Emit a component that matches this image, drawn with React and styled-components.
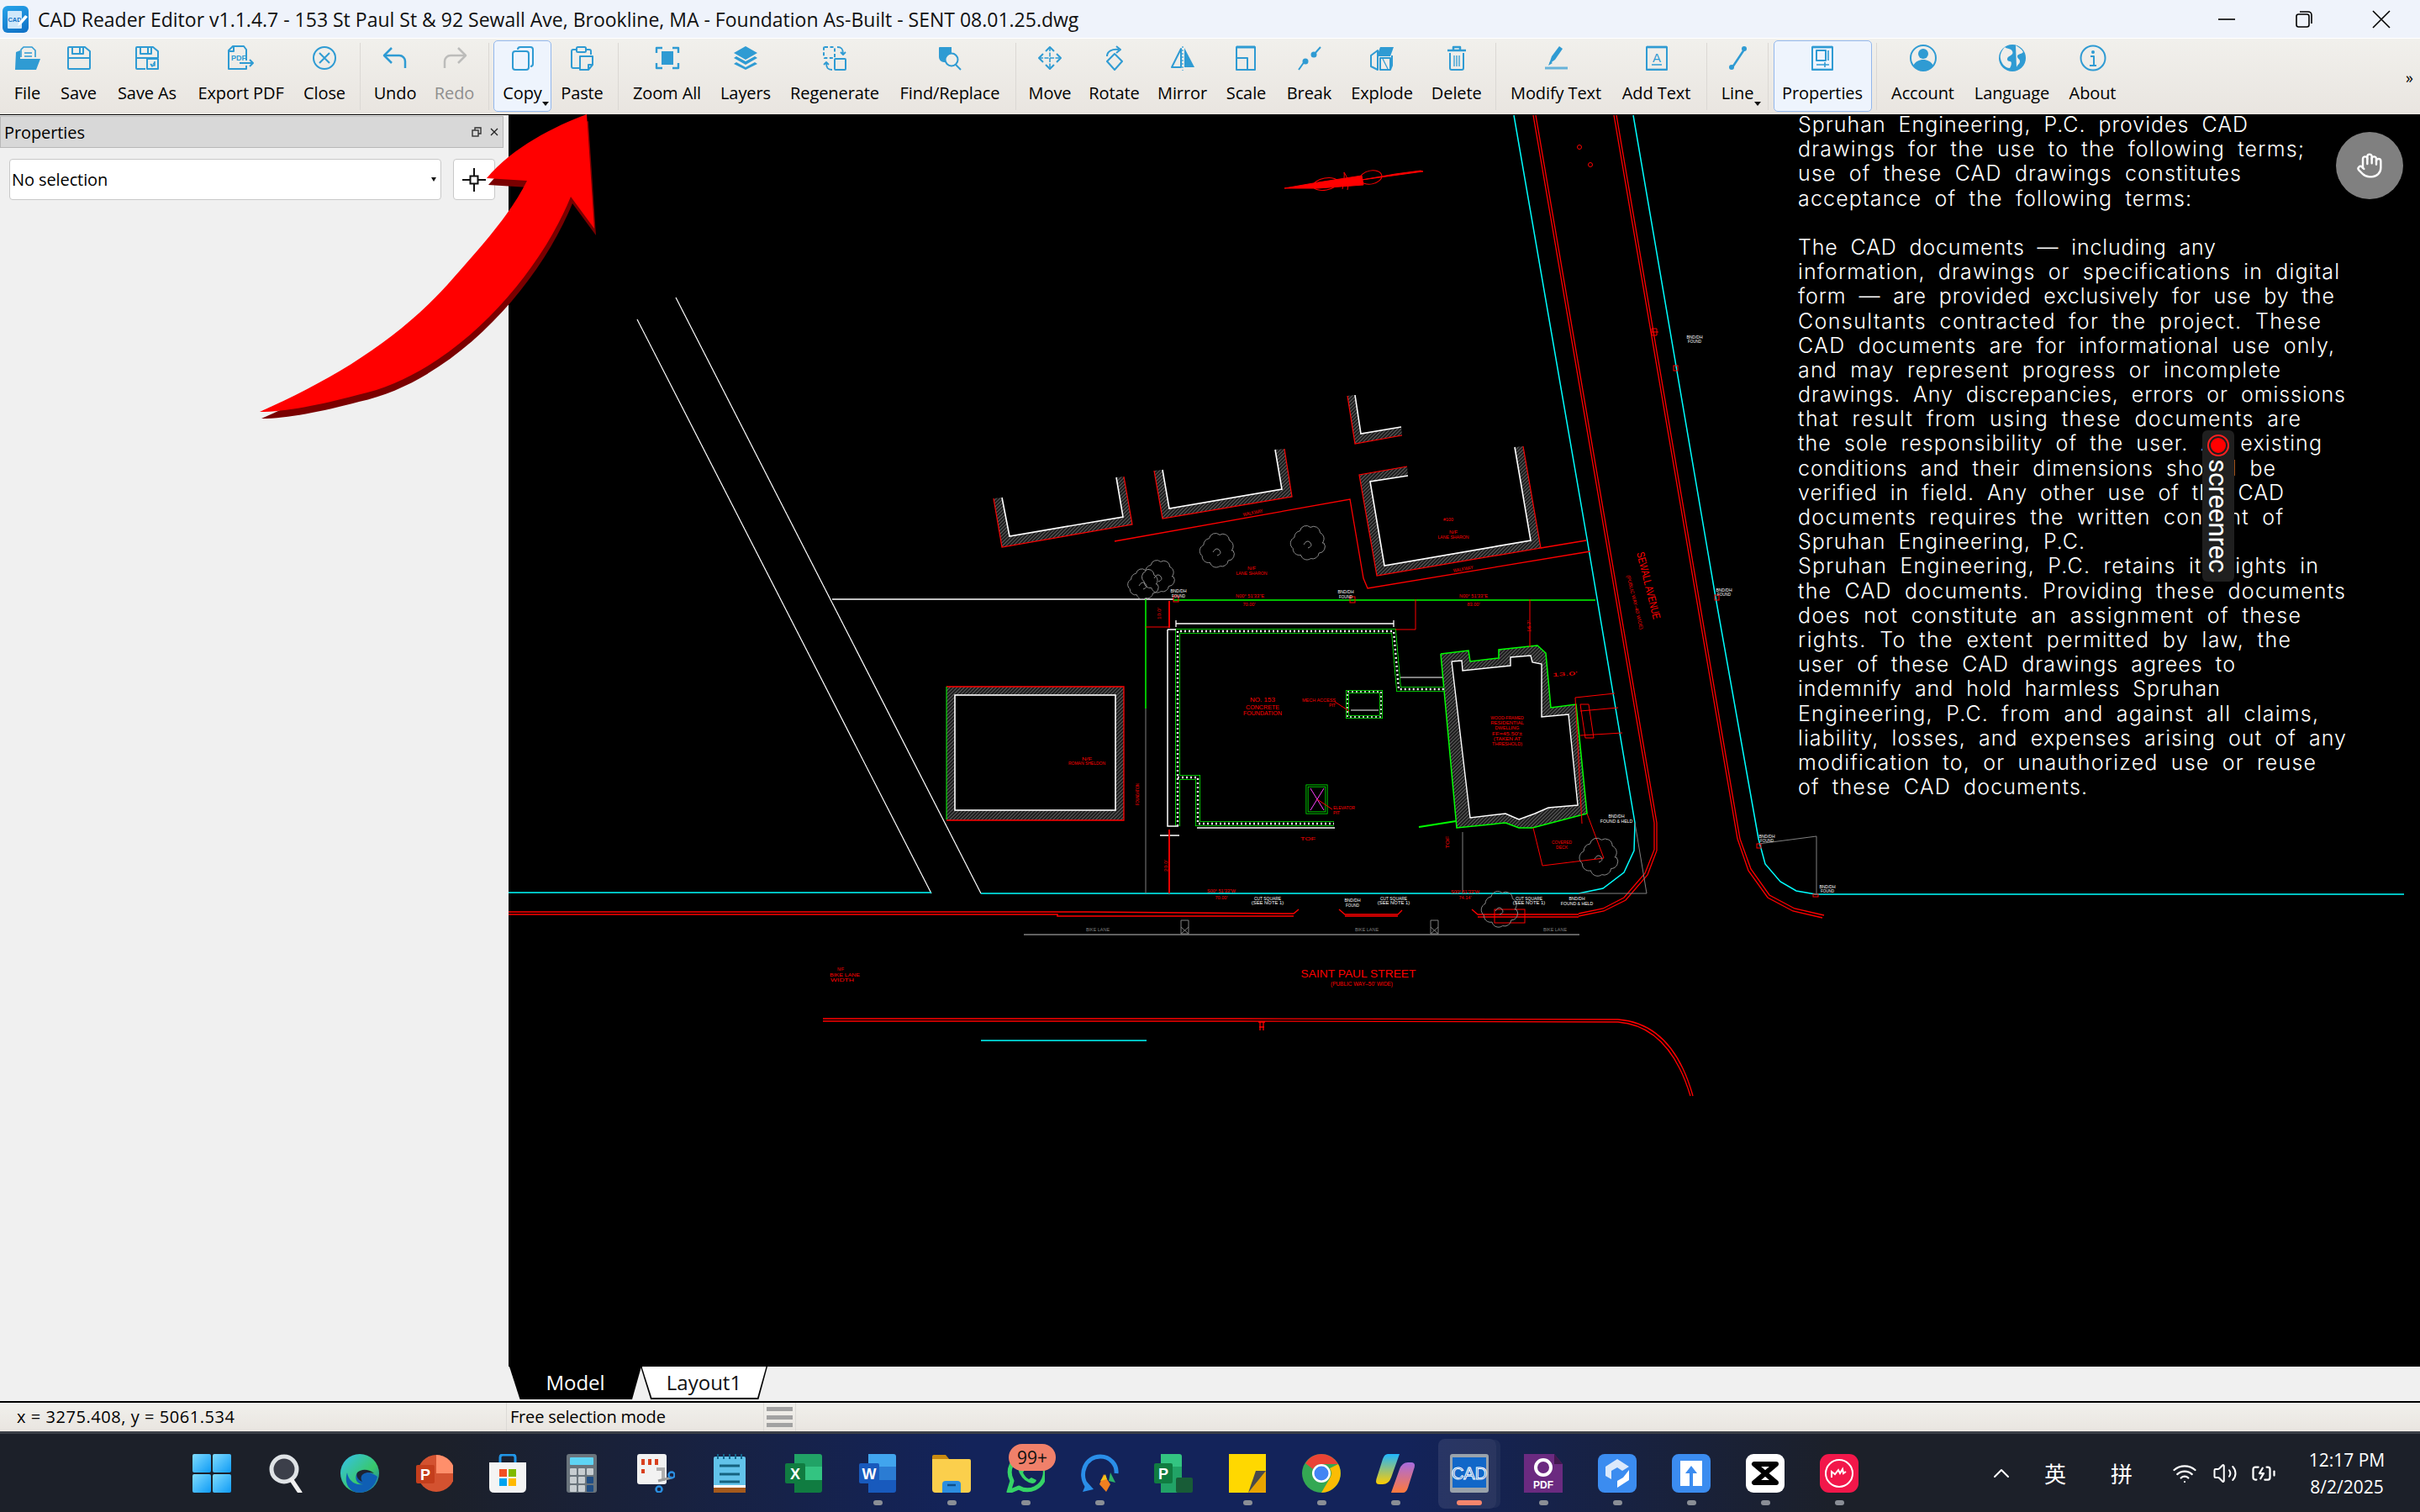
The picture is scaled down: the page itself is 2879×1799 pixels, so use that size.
import React from "react";
import styled, { createGlobalStyle } from "styled-components";
import { Hand, Wifi, Volume2, BatteryCharging, ChevronUp } from "lucide-react";

const GlobalStyle = createGlobalStyle`
  html, body {
    margin: 0;
    padding: 0;
    background: #000;
    overflow: hidden;
  }
  * { box-sizing: border-box; }
`;

const BLUE = "#2f9bd3";

const Ic = ({ children, w = 30, h = 30, vb }) => (
  <svg width={w} height={h} viewBox={vb || `0 0 ${w} ${h}`} fill="none" stroke={BLUE} strokeWidth="2" strokeLinejoin="round">
    {children}
  </svg>
);

const icons = {
  File: (
    <Ic>
      <path d="M7 14V5l3-3h10l4 4v8" strokeWidth="1.6" />
      <path d="M11 9h9M11 13h9" strokeWidth="1.6" />
      <path d="M0 29 L1 8 L6 6 L6 16 H30 L25 29Z" fill={BLUE} stroke="none" />
      <path d="M7 14 h18 v2 h-18z" fill="#f0eeea" stroke="none" />
    </Ic>
  ),
  Save: (
    <Ic>
      <path d="M2 3a1 1 0 0 1 1-1h19l6 5v20a1 1 0 0 1-1 1H3a1 1 0 0 1-1-1z" />
      <path d="M7 2v8h13V2M16 3v6" />
      <path d="M2 15h26" />
    </Ic>
  ),
  "Save As": (
    <Ic>
      <path d="M13 28H3a1 1 0 0 1-1-1V3a1 1 0 0 1 1-1h19l6 5v8" />
      <path d="M7 2v8h13V2M16 3v6" />
      <path d="M2 15h26" />
      <rect x="15" y="16" width="13" height="12" />
      <path d="M24 19v5h-4M19 22l2 3 3-2" fill={BLUE} strokeWidth="1.5" />
    </Ic>
  ),
  "Export PDF": (
    <Ic w={32}>
      <path d="M22 18V5l-3-4H6L1 6v22h21v-4" />
      <path d="M1 7h6V1" />
      <text x="4" y="18" fontFamily="Liberation Sans" fontSize="9" fontWeight="700" fill={BLUE} stroke="none">PDF</text>
      <path d="M14 21h16M26 17l4 4-4 4" />
    </Ic>
  ),
  Close: (
    <Ic>
      <circle cx="15" cy="15" r="13" />
      <path d="M9 9l12 12M21 9L9 21" />
    </Ic>
  ),
  Undo: (
    <Ic>
      <path d="M11 3L2 12l9 9" strokeWidth="2.5" />
      <path d="M2 12h18a7 7 0 0 1 7 7v8" strokeWidth="2.5" />
    </Ic>
  ),
  Redo: (
    <Ic>
      <g stroke="#bcbcba">
        <path d="M19 3l9 9-9 9" strokeWidth="2.5" />
        <path d="M28 12H10a7 7 0 0 0-7 7v8" strokeWidth="2.5" />
      </g>
    </Ic>
  ),
  Copy: (
    <Ic>
      <path d="M9 5a3 3 0 0 1 3-3h12a3 3 0 0 1 3 3v17a3 3 0 0 1-3 3" />
      <rect x="3" y="7" width="19" height="22" rx="3" />
    </Ic>
  ),
  Paste: (
    <Ic>
      <path d="M12 27H4a2 2 0 0 1-2-2V7a2 2 0 0 1 2-2h4M19 5h4a2 2 0 0 1 2 2v4" />
      <rect x="8" y="2" width="11" height="6" rx="1.5" />
      <path d="M12 13h15v10l-5 6H12z" />
      <path d="M22 29v-6h5" />
    </Ic>
  ),
  "Zoom All": (
    <Ic>
      <path d="M2 9V3h7M21 3h7v6M28 21v6h-7M9 27H2v-6" strokeWidth="2.4" />
      <rect x="8" y="7" width="14" height="16" fill={BLUE} stroke="none" />
    </Ic>
  ),
  Layers: (
    <Ic>
      <path d="M15 1l14 8-14 8L1 9z" fill={BLUE} stroke="none" />
      <path d="M4 13l11 6 11-6 3 2-14 8-14-8z" fill={BLUE} stroke="none" />
      <path d="M4 20l11 6 11-6 3 2-14 7-14-7z" fill={BLUE} stroke="none" />
    </Ic>
  ),
  Regenerate: (
    <Ic>
      <rect x="2" y="2" width="13" height="13" rx="1" strokeDasharray="4 2.5" />
      <rect x="15" y="16" width="13" height="13" rx="1" />
      <path d="M18 2c5 0 7 2 7 8M22 8l3 3 3-3" strokeWidth="1.8" />
      <path d="M12 29c-5 0-7-2-7-8M2 23l3-3 3 3" strokeWidth="1.8" />
    </Ic>
  ),
  "Find/Replace": (
    <Ic>
      <path d="M2 3a1 1 0 0 1 1-1h14v7a9 9 0 0 0-7 11 H8a6 6 0 0 1-6-6z" fill={BLUE} stroke="none" />
      <circle cx="17" cy="17" r="7.5" />
      <path d="M22 23l6 6" />
    </Ic>
  ),
  Move: (
    <Ic>
      <path d="M15 2v26M2 15h26" strokeWidth="1.6" strokeDasharray="5 1.5" />
      <path d="M10 7l5-5 5 5M10 23l5 5 5-5M7 10l-5 5 5 5M23 10l5 5-5 5" />
    </Ic>
  ),
  Rotate: (
    <Ic>
      <path d="M15 10l9 9-9 10-9-10z" />
      <path d="M6 13c0-6 6-9 14-8M17 1l5 4-5 4" />
    </Ic>
  ),
  Mirror: (
    <Ic>
      <path d="M13 4L2 26h11z" />
      <path d="M17 3l12 23H17z" fill={BLUE} stroke="none" />
      <path d="M15 1v29" strokeDasharray="2 2" strokeWidth="1.2" />
    </Ic>
  ),
  Scale: (
    <Ic>
      <path d="M3 2h22v27H3z" />
      <path d="M3 15h13v14" />
      <path d="M3 2h22" strokeWidth="3" />
    </Ic>
  ),
  Break: (
    <Ic>
      <path d="M2 29l7-10M20 11l8-9" strokeWidth="2" />
      <circle cx="10" cy="19" r="3.5" fill={BLUE} stroke="none" />
      <circle cx="20" cy="11" r="3.5" fill={BLUE} stroke="none" />
    </Ic>
  ),
  Explode: (
    <Ic>
      <path d="M2 12l8-6v23l-8-4z" />
      <path d="M13 2h16l-4 11H9z" fill={BLUE} stroke="none" />
      <path d="M13 15h12v14H13zM27 12v12l-2 5" />
      <path d="M16 16l6 12" strokeWidth="1.2" />
    </Ic>
  ),
  Delete: (
    <Ic>
      <path d="M4 6h22M11 5V2h8v3" strokeWidth="2.5" />
      <path d="M7 9v18a2 2 0 0 0 2 2h12a2 2 0 0 0 2-2V9" />
      <path d="M12 12v13M15 12v13M18 12v13" strokeWidth="1.3" />
    </Ic>
  ),
  "Modify Text": (
    <Ic>
      <path d="M7 22l3-9L19 1l4 3-9 13z" fill={BLUE} stroke="none" />
      <path d="M2 27h27" strokeWidth="3" opacity=".7" />
      <path d="M6 24l2-5 3 2z" fill={BLUE} stroke="none" />
    </Ic>
  ),
  "Add Text": (
    <Ic>
      <path d="M3 2h24v27H3z" />
      <path d="M3 2h24M3 29h24" strokeWidth="3" opacity=".7" />
      <text x="15" y="20" textAnchor="middle" fontFamily="Liberation Sans" fontSize="15" fill={BLUE} stroke="none">A</text>
      <path d="M9 23h12" strokeWidth="1.5" />
    </Ic>
  ),
  Line: (
    <Ic>
      <path d="M9 26L23 5" strokeWidth="2.5" />
      <circle cx="8" cy="26" r="3" fill={BLUE} stroke="none" />
      <circle cx="23" cy="4" r="3" fill={BLUE} stroke="none" />
    </Ic>
  ),
  Properties: (
    <Ic>
      <path d="M3 2h24v27H3z" />
      <path d="M3 2h24M3 29h24" strokeWidth="3" opacity=".7" />
      <rect x="8" y="6" width="11" height="12" />
      <path d="M22 6v12M8 23h15M18 20v6" strokeWidth="1.6" />
    </Ic>
  ),
  Account: (
    <Ic w={34} h={32}>
      <circle cx="17" cy="16" r="15" />
      <path d="M5 25c3-5 7-7 12-7s9 2 12 7a15 15 0 0 1-24 0z" fill={BLUE} stroke="none" />
      <circle cx="17" cy="11" r="6" fill={BLUE} stroke="none" />
    </Ic>
  ),
  Language: (
    <Ic w={34} h={32}>
      <circle cx="17" cy="16" r="16" fill={BLUE} stroke="none" />
      <path d="M8 3c4 3 7 1 9 5s-3 5-5 7-1 5 2 5 2 5 0 8C8 28 4 22 3 17s1-9 5-14z M21 1c3 2 7 4 9 8-3 3-7 2-7 5s3 3 3 6-3 4-4 7" fill="#f0eeea" stroke="none" />
    </Ic>
  ),
  About: (
    <Ic w={32} h={32}>
      <circle cx="16" cy="16" r="14.5" />
      <circle cx="16" cy="9" r="2" fill={BLUE} stroke="none" />
      <path d="M13 14h4v11M12 25h8" />
    </Ic>
  ),
};

const toolGroups = [
  [
    { label: "File", w: 32 },
    { label: "Save", w: 44 },
    { label: "Save As", w: 73 },
    { label: "Export PDF", w: 104 },
    { label: "Close", w: 49 },
  ],
  [
    { label: "Undo", w: 49 },
    { label: "Redo", w: 46, disabled: true },
  ],
  [
    { label: "Copy", w: 46, active: true, menu: true },
    { label: "Paste", w: 50 },
  ],
  [
    { label: "Zoom All", w: 82 },
    { label: "Layers", w: 59 },
    { label: "Regenerate", w: 107 },
    { label: "Find/Replace", w: 121 },
  ],
  [
    { label: "Move", w: 47 },
    { label: "Rotate", w: 60 },
    { label: "Mirror", w: 56 },
    { label: "Scale", w: 50 },
    { label: "Break", w: 54 },
    { label: "Explode", w: 73 },
    { label: "Delete", w: 58.5 },
  ],
  [
    { label: "Modify Text", w: 108 },
    { label: "Add Text", w: 85 },
  ],
  [{ label: "Line", w: 38, menu: true }],
  [{ label: "Properties", w: 94, active: true }],
  [
    { label: "Account", w: 75 },
    { label: "Language", w: 91 },
    { label: "About", w: 55 },
  ],
];

const noteLines = [
  ["Spruhan Engineering, P.C. provides CAD", 2674],
  ["drawings for the use to the following terms;", 2741],
  ["use of these CAD drawings constitutes", 2666],
  ["acceptance of the following terms:", 2607],
  ["", 0],
  ["The CAD documents — including any", 2636],
  ["information, drawings or specifications in digital", 2783],
  ["form — are provided exclusively for use by the", 2777],
  ["Consultants contracted for the project. These", 2761],
  ["CAD documents are for informational use only,", 2777],
  ["and may represent progress or incomplete", 2713],
  ["drawings. Any discrepancies, errors or omissions", 2790],
  ["that result from using these documents are", 2737],
  ["the sole responsibility of the user. All existing", 2762],
  ["conditions and their dimensions should be", 2707],
  ["verified in field. Any other use of the CAD", 2717],
  ["documents requires the written consent of", 2716],
  ["Spruhan Engineering, P.C.", 2480],
  ["Spruhan Engineering, P.C. retains its rights in", 2758],
  ["the CAD documents. Providing these documents", 2790],
  ["does not constitute an assignment of these", 2737],
  ["rights. To the extent permitted by law, the", 2725],
  ["user of these CAD drawings agrees to", 2659],
  ["indemnify and hold harmless Spruhan", 2641],
  ["Engineering, P.C. from and against all claims,", 2758],
  ["liability, losses, and expenses arising out of any", 2791],
  ["modification to, or unauthorized use or reuse", 2755],
  ["of these CAD documents.", 2483],
];

const pts = (arr) => arr.map((p) => p.join(",")).join(" ");

const RED = "#ff0000";
const GREEN = "#00ff00";
const CYAN = "#00ffff";
const GRAY = "#808080";

// scalloped tree outline
function treePath(cx, cy, r, lobes = 9) {
  let d = "";
  for (let i = 0; i <= lobes; i++) {
    const a = (i / lobes) * Math.PI * 2;
    const x = cx + Math.cos(a) * r * (i % 2 ? 0.95 : 1.05);
    const y = cy + Math.sin(a) * r * (i % 3 ? 1.05 : 0.92);
    d += i === 0 ? `M${x.toFixed(1)} ${y.toFixed(1)}` : `A${(r * 0.42).toFixed(1)} ${(r * 0.42).toFixed(1)} 0 0 1 ${x.toFixed(1)} ${y.toFixed(1)}`;
  }
  return d + "Z";
}

const Tree = ({ x, y, r = 18 }) => (
  <g fill="none" stroke="#8a8a8a" strokeWidth="1">
    <path d={treePath(x, y, r)} />
    <path d={`M${x - 5} ${y + 2}q4 -7 8 -2q3 4 -3 6`} />
  </g>
);

const Tag = ({ x, y, w, size = 6, fill = RED, rot, children, anchor = "middle" }) => (
  <text
    x={x}
    y={y}
    textAnchor={anchor}
    fontFamily="Liberation Sans, sans-serif"
    fontSize={size}
    fill={fill}
    textLength={w}
    lengthAdjust={w ? "spacingAndGlyphs" : undefined}
    transform={rot ? `rotate(${rot} ${x} ${y})` : undefined}
  >
    {children}
  </text>
);

const Wall = ({ outer, inner }) => (
  <g>
    <polygon points={pts([...outer, ...inner])} fill="url(#hatch)" />
    <polyline points={pts(outer)} fill="none" stroke={RED} strokeWidth="1.2" />
    <polyline points={pts(inner)} fill="none" stroke="#fff" strokeWidth="1.6" />
  </g>
);

function CadDrawing() {
  return (
    <Sheet viewBox="605 137 2274 1489">
      <defs>
        <pattern id="hatch" width="3" height="3" patternUnits="userSpaceOnUse" patternTransform="rotate(45)">
          <rect width="3" height="3" fill="#1c1c1c" />
          <line x1="0" y1="0" x2="0" y2="3" stroke="#8c8c8c" strokeWidth="1.2" />
        </pattern>
      </defs>

      {/* neighbouring roads */}
      <g fill="none" stroke="#fff" strokeWidth="1.2">
        <path d="M758 380L1108 1063" />
        <path d="M804 354L1167 1063" />
        <path d="M990 713H1396" strokeWidth="1.6" />
      </g>
      <g fill="none" stroke={CYAN} strokeWidth="1.5">
        <path d="M605 1062H1108M1167 1063H1878L1907 1057L1932 1038L1944 1012L1945 979L1888 641L1801 137" />
        <path d="M1943 137L2040 705L2092 998L2100 1028L2118 1049L2137 1060L2160 1064H2860" />
        <path d="M1167 1238H1364" />
      </g>
      <g fill="none" stroke={RED} strokeWidth="1.3">
        <path d="M1824 137L1968 979V1011L1957 1039L1932 1068L1907 1081L1878 1087" />
        <path d="M1827 137L1971 979V1012L1960 1041L1934 1071L1908 1084L1878 1090" />
        <path d="M1920 137L2067 998L2080 1036L2103 1068L2133 1084L2168 1092" />
        <path d="M1923 137L2070 998L2083 1034L2105 1065L2135 1081L2170 1089" />
        <path d="M605 1085H1293L1539 1087L1545 1082" strokeWidth="1.5" />
        <path d="M605 1088H1258V1090H1539" strokeWidth="1.5" />
        <path d="M1593 1082L1600 1088H1663L1668 1083M1600 1090H1663" />
        <path d="M1751 1082L1758 1088H1878M1758 1091H1878" />
        <path d="M979 1212H1475L1925 1213Q1990 1218 2014 1304" />
        <path d="M979 1215H1475L1925 1216Q1986 1221 2011 1304" />
        <path d="M1497 1216h8M1499 1216v10M1503 1216v10M1498 1222h6" />
        <path d="M1326 644L1606 594L1622 688L1627 700L1892 656" />
        <path d="M1833 652L1887 643" />
      </g>
      <g fill="none" stroke={GRAY} strokeWidth="1">
        <path d="M1945 979L1959 1063H1878" />
        <path d="M2092 1004L2161 995V1064" />
        <path d="M1396 714H1898" stroke={GREEN} strokeWidth="1.5" />
        <path d="M1363 843V1063" />
        <path d="M1218 1112H1879" strokeWidth="1.6" />
        <path d="M1740 990V1063" />
        <path d="M1405 1095h9v16h-9zM1405 1103l9 8M1414 1103l-9 8" />
        <path d="M1702 1095h9v16h-9zM1702 1103l9 8M1711 1103l-9 8" />
      </g>

      {/* ornament up top */}
      <g fill={RED} stroke={RED}>
        <path d="M1528 224L1568 217L1620 209L1622 220L1568 224Z" />
        <path d="M1620 214L1693 204L1690 203L1660 207Z" />
        <g fill="none">
          <ellipse cx="1577" cy="219" rx="15" ry="7" transform="rotate(-10 1577 219)" />
          <ellipse cx="1631" cy="211" rx="13" ry="8" transform="rotate(-10 1631 211)" />
          <path d="M1597 225Q1600 210 1599 205Q1606 215 1603 226" />
        </g>
      </g>
      <g fill="none" stroke={RED}>
        <circle cx="1879" cy="175" r="2.5" />
        <circle cx="1892" cy="196" r="2.5" />
        <path d="M1965 391h6v8h-6zM1965 395h8" />
        <rect x="1991" y="435" width="5" height="6" />
        <rect x="2040" y="708" width="5" height="6" />
        <rect x="1396" y="709" width="6" height="7" />
        <rect x="1606" y="710" width="6" height="7" />
        <rect x="2090" y="1004" width="5" height="5" />
        <rect x="2157" y="1064" width="6" height="3" />
        <rect x="1778" y="1082" width="36" height="16" />
      </g>

      {/* neighbouring buildings */}
      <Wall
        outer={[[1182, 593], [1192, 651], [1347, 624], [1337, 567]]}
        inner={[[1328, 568], [1336, 615], [1201, 638], [1192, 592]]}
      />
      <Wall
        outer={[[1373, 560], [1383, 617], [1537, 591], [1528, 534]]}
        inner={[[1517, 535], [1525, 582], [1391, 605], [1383, 559]]}
      />
      <Wall
        outer={[[1603, 471], [1612, 528], [1668, 518]]}
        inner={[[1667, 508], [1619, 516], [1612, 470]]}
      />
      <Wall
        outer={[[1674, 555], [1617, 565], [1638, 685], [1833, 652], [1812, 531]]}
        inner={[[1802, 532], [1821, 643], [1647, 673], [1630, 573], [1675, 566]]}
      />

      {/* garage to the left */}
      <path d="M1126 817H1337V976H1126ZM1136 827V964H1327V827Z" fill="url(#hatch)" fillRule="evenodd" />
      <path d="M1126 817H1337V976H1126" fill="none" stroke={RED} strokeWidth="1.3" />
      <path d="M1126 817V975" fill="none" stroke={GREEN} />
      <rect x="1136" y="827" width="191" height="137" fill="none" stroke="#fff" strokeWidth="1.6" />

      {/* house */}
      <path
        d="M1714 778L1747 774L1749 787L1783 783V773L1829 768L1839 777L1845 842L1875 838L1888 968L1823 985L1807 985L1791 979L1733 985Z
           M1727 787L1739 786L1740 798L1797 792V782L1821 780L1823 788L1834 790V853L1866 850L1877 958L1842 961L1826 968L1807 975L1791 968L1749 973Z"
        fill="url(#hatch)"
        fillRule="evenodd"
      />
      <path d="M1714 778L1747 774L1749 787L1783 783V773L1829 768L1839 777L1845 842L1875 838L1888 968L1823 985L1807 985L1791 979L1733 985L1714 778" fill="none" stroke={GREEN} strokeWidth="1.5" />
      <path d="M1727 787L1739 786L1740 798L1797 792V782L1821 780L1823 788L1834 790V853L1866 850L1877 958L1842 961L1826 968L1807 975L1791 968L1749 973L1727 787" fill="none" stroke="#fff" strokeWidth="1.4" />
      <path d="M1688 984L1732 977" fill="none" stroke={GREEN} strokeWidth="2" />

      {/* foundation walls */}
      <g fill="none">
        <g stroke={GREEN} strokeWidth="6">
          <path d="M1401 983V751H1658L1664 820H1718" />
          <path d="M1401 925H1425V980H1587" />
          <rect x="1603" y="823" width="40" height="30" strokeWidth="4" />
          <rect x="1555" y="935" width="23" height="32" strokeWidth="3" />
        </g>
        <g stroke="#000" strokeWidth="4.4">
          <path d="M1401 983V751H1658L1664 820H1718" />
          <path d="M1401 925H1425V980H1587" />
          <rect x="1603" y="823" width="40" height="30" strokeWidth="2.5" />
          <rect x="1555" y="935" width="23" height="32" strokeWidth="1.5" />
        </g>
        <g stroke="#fff" strokeWidth="2.4" strokeDasharray="2 3">
          <path d="M1401 983V751H1658L1664 820H1718" />
          <path d="M1401 925H1425V980H1587" />
          <rect x="1603" y="823" width="40" height="30" strokeWidth="1.6" />
        </g>
        <path d="M1389 749V983H1402M1389 749H1399" stroke="#fff" strokeWidth="1.5" />
        <path d="M1399 742H1658M1399 738v8M1658 738v8M1424 985H1588M1380 994H1403" stroke="#fff" strokeWidth="1.3" />
        <path d="M1666 806H1716M1607 845H1640" stroke="#fff" />
        <path d="M1559 938L1575 964M1575 938L1559 964" stroke="#ff40ff" />
        <path d="M1567 951L1585 963" stroke={RED} />
        <path d="M1588 835L1605 846" stroke={RED} />
        <path d="M1363 713V843" stroke={GREEN} strokeWidth="1.5" />
        <path d="M1391 715V747M1391 987V1063" stroke={RED} strokeWidth="1.8" />
        <path d="M1363 746H1391M1660 749H1684V713" stroke={RED} />
        <path d="M1820 713V770" stroke={RED} />
        <path d="M1824 985L1835 1030L1908 1021L1888 968" stroke={RED} />
        <path d="M1874 830L1921 825M1874 830L1882 980M1880 846L1925 842M1880 875L1930 872" stroke={RED} />
        <path d="M1880 838h10l6 40h-10z" stroke={RED} />
      </g>

      {/* trees */}
      <Tree x={1448} y={655} />
      <Tree x={1556} y={646} />
      <Tree x={1360} y={695} r={16} />
      <Tree x={1378} y={686} r={17} />
      <Tree x={1902} y={1020} r={20} />
      <Tree x={1784} y={1082} r={19} />

      {/* labels */}
      <Tag x={1502} y={835} size={8} w={30}>NO. 153</Tag>
      <Tag x={1502} y={844} size={8} w={40}>CONCRETE</Tag>
      <Tag x={1502} y={851} size={8} w={46}>FOUNDATION</Tag>
      <Tag x={1569} y={835} w={40} size={6}>MECH ACCESS</Tag>
      <Tag x={1585} y={841} w={8} size={6}>PIT</Tag>
      <Tag x={1599} y={963} w={26} size={6}>ELEVATOR</Tag>
      <Tag x={1590} y={969} w={8} size={6}>PIT</Tag>
      <Tag x={1293} y={905} w={12} size={5}>N/F</Tag>
      <Tag x={1293} y={910} w={44} size={5}>ROMAN SHELDON</Tag>
      {["WOOD-FRAMED", "RESIDENTIAL", "DWELLING", "FF=45.50'±", "(TAKEN AT", "THRESHOLD)"].map((t, i) => (
        <Tag key={t} x={1793} y={856 + i * 6.2} w={t.length * 3.6} size={6}>{t}</Tag>
      ))}
      <Tag x={1858} y={1004} w={24} size={6}>COVERED</Tag>
      <Tag x={1858} y={1010} w={14} size={6}>DECK</Tag>
      <Tag x={1491} y={612} w={24} size={6} rot={-12}>WALKWAY</Tag>
      <Tag x={1741} y={679} w={24} size={6} rot={-10}>WALKWAY</Tag>
      <Tag x={1489} y={678} w={10} size={6}>N/F</Tag>
      <Tag x={1489} y={684} w={37} size={6}>LANE SHARON</Tag>
      <Tag x={1723} y={620} w={12} size={6}>#100</Tag>
      <Tag x={1729} y={635} w={10} size={6}>N/F</Tag>
      <Tag x={1729} y={641} w={37} size={6}>LANE SHARON</Tag>
      <Tag x={1487} y={711} w={34} size={6}>N00° 51'33"E</Tag>
      <Tag x={1486} y={721} w={15} size={6}>70.00'</Tag>
      <Tag x={1753} y={711} w={34} size={6}>N00° 51'33"E</Tag>
      <Tag x={1753} y={721} w={15} size={6}>83.00'</Tag>
      <Tag x={1453} y={1062} w={34} size={6}>S00° 51'33"W</Tag>
      <Tag x={1453} y={1070} w={15} size={6}>70.00'</Tag>
      <Tag x={1743} y={1063} w={34} size={6}>S00° 51'33"W</Tag>
      <Tag x={1743} y={1070} w={15} size={6}>74.14'</Tag>
      <Tag x={1381} y={730} size={6} w={14} rot={-90}>10.0'</Tag>
      <Tag x={1389} y={1030} size={6} w={14} rot={-90}>20.0'</Tag>
      <Tag x={1355} y={945} w={26} size={6} rot={-90}>FOUNDATION</Tag>
      <Tag x={1821} y={745} size={6} w={14} rot={-90}>16.7'</Tag>
      <Tag x={1556} y={1000} w={18} size={6}>TOF</Tag>
      <Tag x={1724} y={1002} w={15} size={6} rot={-90}>TOF</Tag>
      <Tag x={1862} y={804} w={30} size={6} rot={-4}>13.0'</Tag>
      <Tag x={1000} y={1155} w={8} size={6}>N/F</Tag>
      <Tag x={1005} y={1162} w={36} size={6}>BIKE LANE</Tag>
      <Tag x={1002} y={1168} w={28} size={6}>WIDTH</Tag>
      <Tag x={1616} y={1163} w={137} size={12}>SAINT PAUL STREET</Tag>
      <Tag x={1620} y={1173} w={74} size={7}>(PUBLIC WAY–50' WIDE)</Tag>
      <Tag x={1947} y={658} size={13} w={82} rot={76} anchor="start">SEWALL AVENUE</Tag>
      <Tag x={1935} y={685} size={6} w={66} rot={76} anchor="start">(PUBLIC WAY–40' WIDE)</Tag>
      {[
        [1402, 705, "BND/DH"],
        [1402, 711, "FOUND"],
        [1601, 706, "BND/DH"],
        [1601, 712, "FOUND"],
        [2016, 403, "BND/DH"],
        [2016, 408, "FOUND"],
        [2051, 704, "BND/DH"],
        [2051, 709, "FOUND"],
        [2102, 997, "BND/DH"],
        [2102, 1002, "FOUND"],
        [2174, 1057, "BND/DH"],
        [2174, 1062, "FOUND"],
        [1923, 973, "BND/DH"],
        [1923, 979, "FOUND & HELD"],
        [1876, 1071, "BND/DH"],
        [1876, 1077, "FOUND & HELD"],
        [1609, 1073, "BND/DH"],
        [1609, 1079, "FOUND"],
        [1508, 1071, "CUT SQUARE"],
        [1508, 1076, "(SEE NOTE 1)"],
        [1658, 1071, "CUT SQUARE"],
        [1658, 1076, "(SEE NOTE 1)"],
        [1819, 1071, "CUT SQUARE"],
        [1819, 1076, "(SEE NOTE 1)"],
      ].map(([x, y, t]) => (
        <Tag key={`${x}${y}`} x={x} y={y} fill="#fff" size={6} w={t.length * 3.2}>{t}</Tag>
      ))}
      {[1306, 1626, 1850].map((x) => (
        <Tag key={x} x={x} y={1108} fill={GRAY} size={6} w={28}>BIKE LANE</Tag>
      ))}

      {/* general notes */}
      {noteLines.map(([text, end], i) =>
        text ? (
          <NoteLine key={i} x={2139} y={157 + i * 29.19} textLength={end - 2139} lengthAdjust="spacing">
            {text}
          </NoteLine>
        ) : null
      )}
    </Sheet>
  );
}

/* taskbar icons */
const Tile = ({ w = 46, children }) => (
  <svg width={w} height="46" viewBox={`0 0 ${w} 46`}>
    {children}
  </svg>
);

const letterProps = { fontFamily: "Liberation Sans, sans-serif", fontWeight: 700, fill: "#fff", textAnchor: "middle" };

const apps = [
  {
    name: "Start",
    icon: (
      <Tile>
        <defs>
          <linearGradient id="win" x1="0" y1="0" x2="1" y2="1">
            <stop offset="0" stopColor="#7fdcff" />
            <stop offset="1" stopColor="#0f9bf5" />
          </linearGradient>
        </defs>
        <rect x="0" y="0" width="22" height="22" rx="2" fill="url(#win)" />
        <rect x="24" y="0" width="22" height="22" rx="2" fill="url(#win)" />
        <rect x="0" y="24" width="22" height="22" rx="2" fill="url(#win)" />
        <rect x="24" y="24" width="22" height="22" rx="2" fill="url(#win)" />
      </Tile>
    ),
  },
  {
    name: "Search",
    icon: (
      <Tile>
        <circle cx="21" cy="18" r="15" fill="#3c3f4a" stroke="#dfe3e6" strokeWidth="5" />
        <path d="M30 31l10 15" stroke="#f0f0f0" strokeWidth="5" strokeLinecap="round" />
      </Tile>
    ),
  },
  {
    name: "Edge",
    icon: (
      <Tile>
        <defs>
          <linearGradient id="edge" x1="0" y1="0" x2="1" y2="1">
            <stop offset="0" stopColor="#35c1f1" />
            <stop offset=".6" stopColor="#39c86a" />
            <stop offset="1" stopColor="#1b6fc0" />
          </linearGradient>
        </defs>
        <circle cx="23" cy="23" r="23" fill="url(#edge)" />
        <path d="M44 27c-2 10-11 19-21 19C10 46 4 34 8 22c1 8 8 16 19 14-8 0-10-7-8-12 2-4 10-5 16-2 4 2 7 3 9 5z" fill="#0f5fb4" />
        <path d="M20 22c4-4 13-5 20 1-4-1-9-2-13 1-3 2-3 6-1 9-5-2-8-7-6-11z" fill="#1d2333" />
      </Tile>
    ),
  },
  {
    name: "PowerPoint",
    icon: (
      <Tile>
        <circle cx="26" cy="23" r="22" fill="#d35230" />
        <path d="M26 1a22 22 0 0 1 22 22H26z" fill="#ff8f6b" />
        <rect x="2" y="13" width="22" height="22" rx="2" fill="#c43e1c" />
        <text x="13" y="31" fontSize="18" {...letterProps}>P</text>
      </Tile>
    ),
  },
  {
    name: "Store",
    icon: (
      <Tile>
        <path d="M14 10V4q0-3 3-3h12q3 0 3 3v6" fill="none" stroke="#2196e8" strokeWidth="3" />
        <path d="M1 10h44v30q0 6-6 6H7q-6 0-6-6z" fill="#f4f4f4" />
        <rect x="13" y="18" width="9" height="9" fill="#f25022" />
        <rect x="24" y="18" width="9" height="9" fill="#7fba00" />
        <rect x="13" y="29" width="9" height="9" fill="#00a4ef" />
        <rect x="24" y="29" width="9" height="9" fill="#ffb900" />
      </Tile>
    ),
  },
  {
    name: "Calculator",
    icon: (
      <Tile>
        <rect x="5" width="36" height="46" rx="3" fill="#6a747c" />
        <rect x="9" y="4" width="28" height="9" rx="1" fill="#5ed4f4" />
        {[0, 1, 2].map((r) =>
          [0, 1, 2].map((c) => (
            <rect key={`${r}${c}`} x={9 + c * 10} y={17 + r * 10} width="8" height="8" rx="1" fill={c === 2 && r > 0 ? "#1f4d84" : "#c7cdd1"} />
          ))
        )}
      </Tile>
    ),
  },
  {
    name: "Snipping",
    icon: (
      <Tile>
        <rect x="1" width="35" height="36" rx="3" fill="#f2f2f2" />
        <path d="M8 6v7M16 6v7M24 6v7M8 18v5" stroke="#d8401f" strokeWidth="4" />
        <path d="M24 18h8v14" stroke="#b0b0b0" strokeWidth="4" fill="none" />
        <path d="M26 32L42 28" stroke="#9b9b9b" strokeWidth="3" />
        <circle cx="42" cy="25" r="3.5" fill="none" stroke="#2a8ee0" strokeWidth="2.5" />
        <circle cx="27" cy="42" r="3.5" fill="none" stroke="#2a8ee0" strokeWidth="2.5" />
      </Tile>
    ),
  },
  {
    name: "Notepad",
    icon: (
      <Tile>
        <rect x="4" y="3" width="38" height="38" rx="2" fill="#62c3ea" />
        <path d="M9 0v6M16 0v6M23 0v6M30 0v6M37 0v6" stroke="#13648a" strokeWidth="2" />
        <path d="M11 14h24M11 24h24M11 33h24" stroke="#15627f" strokeWidth="3" />
        <rect x="4" y="37" width="38" height="3" fill="#fff" />
        <rect x="4" y="40" width="38" height="6" fill="#a55a1c" />
      </Tile>
    ),
  },
  {
    name: "Excel",
    icon: (
      <Tile>
        <path d="M12 0h30a3 3 0 0 1 3 3v12H12z" fill="#21a366" />
        <path d="M12 15h33v16H12z" fill="#33c481" />
        <path d="M12 31h33v12a3 3 0 0 1-3 3H12z" fill="#107c41" />
        <rect x="1" y="11" width="24" height="24" rx="2" fill="#107c41" />
        <text x="13" y="30" fontSize="18" {...letterProps}>X</text>
      </Tile>
    ),
  },
  {
    name: "Word",
    dot: true,
    icon: (
      <Tile>
        <path d="M12 0h30a3 3 0 0 1 3 3v12H12z" fill="#41a5ee" />
        <path d="M12 15h33v16H12z" fill="#2b7cd3" />
        <path d="M12 31h33v12a3 3 0 0 1-3 3H12z" fill="#185abd" />
        <rect x="1" y="11" width="24" height="24" rx="2" fill="#185abd" />
        <text x="13" y="30" fontSize="18" {...letterProps}>W</text>
      </Tile>
    ),
  },
  {
    name: "Explorer",
    dot: true,
    icon: (
      <Tile>
        <path d="M0 3a2 2 0 0 1 2-2h14l5 6h-21z" fill="#c98a10" />
        <path d="M0 6h44a2 2 0 0 1 2 2v34a4 4 0 0 1-4 4H4a4 4 0 0 1-4-4z" fill="#fbcf4c" />
        <path d="M12 46V36q0-4 4-4h14q4 0 4 4v10z" fill="#2c8ee0" />
        <path d="M18 37h10" stroke="#0f4f8a" strokeWidth="2.5" />
      </Tile>
    ),
  },
  {
    name: "WhatsApp",
    dot: true,
    badge: "99+",
    icon: (
      <Tile>
        <path d="M3 45l4-13a21 21 0 1 1 8 8z" fill="none" stroke="#35d366" strokeWidth="5" strokeLinejoin="round" />
        <path d="M16 14q-3 3 0 9 5 10 15 12 4 0 5-4l-6-3-3 2q-5-3-7-8l2-3-3-5z" fill="#35d366" />
      </Tile>
    ),
  },
  {
    name: "Quick Assist",
    dot: true,
    icon: (
      <Tile>
        <path d="M8 38C-2 24 6 3 24 3c12 0 20 10 19 20" fill="none" stroke="#2a8ee8" strokeWidth="5" />
        <path d="M8 33l8 9-13 3z" fill="#2a8ee8" />
        <path d="M28 24l8 12-5 9-8-9z" fill="#f08020" />
        <path d="M36 22l6 12-8-2z" fill="#2db36b" />
        <path d="M24 32l6-8 2 6z" fill="#f5c518" />
      </Tile>
    ),
  },
  {
    name: "Project",
    icon: (
      <Tile>
        <path d="M8 0h22a3 3 0 0 1 3 3v12H8z" fill="#33c481" />
        <path d="M8 15h25v31H8z" fill="#21a366" />
        <rect x="26" y="28" width="20" height="18" rx="2" fill="#185c37" />
        <rect x="0" y="11" width="22" height="24" rx="2" fill="#107c41" />
        <text x="11" y="30" fontSize="18" {...letterProps}>P</text>
      </Tile>
    ),
  },
  {
    name: "Sticky Notes",
    dot: true,
    icon: (
      <Tile w={46}>
        <rect x="1" y="0" width="44" height="46" fill="#ffd800" />
        <path d="M24 46L45 20v26z" fill="#e8a400" />
        <path d="M24 46l9-26h12z" fill="#4a4a4a" />
      </Tile>
    ),
  },
  {
    name: "Chrome",
    dot: true,
    icon: (
      <Tile>
        <circle cx="23" cy="23" r="23" fill="#34a853" />
        <path d="M23 0a23 23 0 0 1 20 12H23a11 11 0 0 0-10 6L4 11A23 23 0 0 1 23 0z" fill="#ea4335" />
        <path d="M43 12a23 23 0 0 1-20 34l10-17a11 11 0 0 0 0-12z" fill="#fbbc04" />
        <circle cx="23" cy="23" r="11" fill="#fff" />
        <circle cx="23" cy="23" r="8.5" fill="#4285f4" />
      </Tile>
    ),
  },
  {
    name: "Copilot",
    dot: true,
    icon: (
      <Tile>
        <defs>
          <linearGradient id="cop1" x1="0" y1="0" x2="0" y2="1">
            <stop offset="0" stopColor="#1fb6ff" />
            <stop offset="1" stopColor="#ffcc00" />
          </linearGradient>
          <linearGradient id="cop2" x1="0" y1="0" x2="0" y2="1">
            <stop offset="0" stopColor="#a86be0" />
            <stop offset="1" stopColor="#ff7a3c" />
          </linearGradient>
        </defs>
        <path d="M14 0h14l-10 28q-3 8-10 8H4q-6 0-3-8L8 6q2-6 6-6z" fill="url(#cop1)" />
        <path d="M32 46H18l10-28q3-8 10-8h4q6 0 3 8l-7 22q-2 6-6 6z" fill="url(#cop2)" />
      </Tile>
    ),
  },
  {
    name: "CAD Reader",
    dot: true,
    active: true,
    icon: (
      <Tile>
        <rect x="0" y="0" width="46" height="46" rx="3" fill="#9aa3ab" />
        <rect x="3" y="4" width="40" height="36" fill="#1167c8" />
        <text x="23" y="30" fontSize="20" textAnchor="middle" fontFamily="Liberation Sans, sans-serif" fill="none" stroke="#fff" strokeWidth="1">CAD</text>
      </Tile>
    ),
  },
  {
    name: "Foxit PDF",
    dot: true,
    icon: (
      <Tile>
        <path d="M0 0h36l10 12v34H0z" fill="#6b2a80" />
        <path d="M36 0v12h10z" fill="#42184f" />
        <circle cx="23" cy="16" r="9" fill="none" stroke="#fff" strokeWidth="4" />
        <text x="23" y="41" fontSize="12" {...letterProps}>PDF</text>
      </Tile>
    ),
  },
  {
    name: "Box App",
    dot: true,
    icon: (
      <Tile>
        <rect width="46" height="46" rx="8" fill="#3b8cf0" />
        <path d="M23 6l14 9-8 5-6-4-7 4v10l7 4-14-8V15z" fill="#dbe9fb" />
        <path d="M37 19v12L23 40v-8l7-4z" fill="#fff" />
      </Tile>
    ),
  },
  {
    name: "Blue App",
    dot: true,
    icon: (
      <Tile>
        <rect width="46" height="46" rx="8" fill="#3b8cf0" />
        <rect x="10" y="8" width="26" height="30" fill="#fff" />
        <path d="M23 14l7 9h-5v15h-4V23h-5z" fill="#3b8cf0" />
      </Tile>
    ),
  },
  {
    name: "CapCut",
    dot: true,
    icon: (
      <Tile>
        <rect width="46" height="46" rx="9" fill="#fff" />
        <path d="M10 12h26L10 34h26z" fill="none" stroke="#000" strokeWidth="6" strokeLinejoin="round" />
      </Tile>
    ),
  },
  {
    name: "Red App",
    dot: true,
    icon: (
      <Tile>
        <rect width="46" height="46" rx="11" fill="#f2174a" />
        <circle cx="23" cy="23" r="16" fill="none" stroke="#fff" strokeWidth="2" />
        <path d="M14 28v-7l4 3 4-5 2 4 3-5 1 5 3-2" fill="none" stroke="#fff" strokeWidth="2" />
      </Tile>
    ),
  },
];

export default function App() {
  return (
    <>
      <GlobalStyle />
      <Page>
        <TitleBar>
          <AppIcon>
            <svg width="31" height="32" viewBox="0 0 31 32">
              <rect x="6" y="6" width="17" height="21" rx="1" fill="#cfe8fa" />
              <text x="14.5" y="19" textAnchor="middle" fontFamily="Liberation Sans, sans-serif" fontSize="7.5" fontWeight="700" fill="#0f6fc4">CAD</text>
              <path d="M18 24l2-5 7-8 3 2-7 8z" fill="#fff" />
            </svg>
          </AppIcon>
          <TitleText>CAD Reader Editor v1.1.4.7 - 153 St Paul St &amp; 92 Sewall Ave, Brookline, MA - Foundation As-Built - SENT 08.01.25.dwg</TitleText>
          <WindowButtons>
            <WinBtn>
              <svg width="22" height="22" viewBox="0 0 22 22"><path d="M1 11h20" stroke="#000" strokeWidth="1.6" /></svg>
            </WinBtn>
            <WinBtn>
              <svg width="22" height="22" viewBox="0 0 22 22" fill="none" stroke="#000" strokeWidth="1.6">
                <rect x="2" y="5" width="15" height="15" rx="2.5" />
                <path d="M6 2h10a4 4 0 0 1 4 4v10" />
              </svg>
            </WinBtn>
            <WinBtn>
              <svg width="22" height="22" viewBox="0 0 22 22"><path d="M1 1l20 20M21 1L1 21" stroke="#000" strokeWidth="1.6" /></svg>
            </WinBtn>
          </WindowButtons>
        </TitleBar>

        <Toolbar>
          {toolGroups.map((group, i) => (
            <React.Fragment key={i}>
              {i > 0 && <ToolSep />}
              {group.map((t) => (
                <Tool key={t.label} $w={t.w} $active={t.active}>
                  <ToolIcon>{icons[t.label]}</ToolIcon>
                  <ToolLabel $disabled={t.disabled}>{t.label}</ToolLabel>
                  {t.menu && <MenuCaret />}
                </Tool>
              ))}
            </React.Fragment>
          ))}
          <More>»</More>
        </Toolbar>

        <Workspace>
          <Panel>
            <PanelHeader>
              <PanelTitle>Properties</PanelTitle>
              <PanelActions>
                <svg width="12" height="12" viewBox="0 0 12 12" fill="none" stroke="#333" strokeWidth="1.4">
                  <rect x="1" y="4" width="7" height="7" />
                  <path d="M4 4V1h7v7H8" />
                </svg>
                <svg width="10" height="10" viewBox="0 0 10 10" stroke="#222" strokeWidth="1.3">
                  <path d="M1 1l8 8M9 1L1 9" />
                </svg>
              </PanelActions>
            </PanelHeader>
            <SelectionRow>
              <SelectionBox>
                No selection
                <Caret />
              </SelectionBox>
              <PickButton>
                <svg width="30" height="30" viewBox="0 0 30 30" fill="#fff" stroke="#111" strokeWidth="2">
                  <path d="M15 1v28M1 15h28" />
                  <rect x="10.5" y="10.5" width="9" height="9" />
                </svg>
              </PickButton>
            </SelectionRow>
          </Panel>

          <CanvasColumn>
            <Canvas>
              <CadDrawing />
              <HandButton>
                <Hand size={32} color="#fff" strokeWidth={1.8} />
              </HandButton>
              <RecWidget>
                <RecDot />
                <RecText>screenrec</RecText>
              </RecWidget>
            </Canvas>
            <TabBar>
              <SheetTab $current>
                <span>Model</span>
              </SheetTab>
              <SheetTab>
                <span>Layout1</span>
              </SheetTab>
            </TabBar>
          </CanvasColumn>
        </Workspace>

        <StatusBar>
          <StatusCell $w={603} $pad={20} $ls={0.55}>x = 3275.408, y = 5061.534</StatusCell>
          <StatusCell $w={306} $pad={4}>Free selection mode</StatusCell>
          <StatusGrip>
            <i />
            <i />
            <i />
          </StatusGrip>
        </StatusBar>

        <Taskbar>
          <AppStrip>
            {apps.map((a) => (
              <AppSlot key={a.name} $active={a.active} title={a.name}>
                {a.icon}
                {a.badge && <Badge>{a.badge}</Badge>}
                <AppDot $show={a.dot} $active={a.active} />
              </AppSlot>
            ))}
          </AppStrip>
          <Tray>
            <TrayItem $w={38}>
              <ChevronUp size={32} color="#fff" strokeWidth={1.5} />
            </TrayItem>
            <TrayItem $w={50} $ml={20}>英</TrayItem>
            <TrayItem $w={50} $ml={29}>拼</TrayItem>
            <TrayItem $w={34} $ml={33}>
              <Wifi size={30} color="#fff" strokeWidth={1.8} />
            </TrayItem>
            <TrayItem $w={30} $ml={16}>
              <Volume2 size={30} color="#fff" strokeWidth={1.6} />
            </TrayItem>
            <TrayItem $w={30} $ml={16}>
              <BatteryCharging size={36} color="#fff" strokeWidth={1.8} />
            </TrayItem>
            <Clock>
              <span>12:17 PM</span>
              <span>8/2/2025</span>
            </Clock>
          </Tray>
        </Taskbar>

        <BigArrow viewBox="0 0 2879 1799">
          <path
            d="M698 136L707 272L679 234C640 330 540 445 425 470C380 482 340 490 309 490C400 450 480 400 540 330C580 285 610 250 627 215L579 212C610 175 660 150 698 136Z"
            fill="#7a0000"
            transform="translate(2 8)"
          />
          <path
            d="M698 136L707 272L679 234C640 330 540 445 425 470C380 482 340 490 309 490C400 450 480 400 540 330C580 285 610 250 627 215L579 212C610 175 660 150 698 136Z"
            fill="#ff0000"
          />
        </BigArrow>
      </Page>
    </>
  );
}

const uiFont = `"Open Sans", "Noto Sans", sans-serif`;

const Page = styled.div`
  position: relative;
  width: 2879px;
  height: 1799px;
  display: flex;
  flex-direction: column;
  overflow: hidden;
  font-family: ${uiFont};
  color: #000;
  background: #f0f0f0;
`;

const TitleBar = styled.div`
  height: 46px;
  flex: none;
  display: flex;
  align-items: center;
  background: #eff3fb;
  border-bottom: 1px solid #fff;
  padding-left: 3px;
`;

const AppIcon = styled.div`
  width: 31px;
  height: 32px;
  border-radius: 6px;
  overflow: hidden;
  background: linear-gradient(160deg, #27a4ea, #0f6fc4);
`;

const TitleText = styled.div`
  margin-left: 11px;
  font-size: 23px;
  white-space: nowrap;
  color: #111;
`;

const WindowButtons = styled.div`
  margin-left: auto;
  display: flex;
`;

const WinBtn = styled.div`
  width: 92px;
  height: 45px;
  display: flex;
  align-items: center;
  justify-content: center;
`;

const Toolbar = styled.div`
  height: 91px;
  flex: none;
  display: flex;
  align-items: flex-start;
  padding: 2px 0 0 5px;
  background: linear-gradient(#f1f0ec, #e9e5e0);
  border-bottom: 1px solid #000;
`;

const Tool = styled.div`
  position: relative;
  width: ${(p) => p.$w + 23}px;
  height: 85px;
  flex: none;
  display: flex;
  flex-direction: column;
  align-items: center;
  padding-top: 4px;
  border-radius: 5px;
  border: 1px solid ${(p) => (p.$active ? "#93b7ec" : "transparent")};
  background: ${(p) => (p.$active ? "#eef4fd" : "transparent")};
`;

const ToolIcon = styled.div`
  height: 32px;
  display: flex;
  align-items: center;
  justify-content: center;
`;

const ToolLabel = styled.div`
  margin-top: 13px;
  font-size: 20px;
  line-height: 26px;
  letter-spacing: -0.1px;
  white-space: nowrap;
  color: ${(p) => (p.$disabled ? "#8f8f8f" : "#000")};
`;

const MenuCaret = styled.span`
  position: absolute;
  right: 2px;
  bottom: 6px;
  border-left: 4px solid transparent;
  border-right: 4px solid transparent;
  border-top: 5px solid #111;
`;

const ToolSep = styled.div`
  width: 1px;
  height: 80px;
  flex: none;
  margin: 3px 5.5px 0;
  background: #dbd8d4;
`;

const More = styled.div`
  margin-left: auto;
  padding-right: 8px;
  align-self: center;
  font-size: 18px;
`;

const Workspace = styled.div`
  flex: 1;
  min-height: 0;
  display: flex;
`;

const Panel = styled.div`
  width: 605px;
  flex: none;
  background: #f0f0f0;
  padding: 1px 6px 0 0;
`;

const PanelHeader = styled.div`
  height: 38px;
  display: flex;
  align-items: center;
  justify-content: space-between;
  padding: 0 5px 0 4px;
  background: #d8d8d8;
  border: 1px solid #b8b8b8;
`;

const PanelTitle = styled.div`
  font-size: 20px;
  letter-spacing: -0.1px;
`;

const PanelActions = styled.div`
  display: flex;
  align-items: center;
  gap: 10px;
`;

const SelectionRow = styled.div`
  display: flex;
  gap: 14px;
  padding: 13px 10px 0 10.5px;
`;

const SelectionBox = styled.div`
  position: relative;
  width: 514px;
  height: 49px;
  background: #fff;
  border: 1px solid #c8c8c8;
  border-radius: 4px;
  padding: 2px 0 0 2.5px;
  font-size: 20px;
  line-height: 44px;
  letter-spacing: -0.1px;
`;

const Caret = styled.span`
  position: absolute;
  right: 5px;
  top: 21px;
  border-left: 3.5px solid transparent;
  border-right: 3.5px solid transparent;
  border-top: 5px solid #111;
`;

const PickButton = styled.div`
  width: 50px;
  height: 49px;
  background: #fff;
  border: 1px solid #c8c8c8;
  border-radius: 4px;
  display: flex;
  align-items: center;
  justify-content: center;
`;

const CanvasColumn = styled.div`
  flex: 1;
  min-width: 0;
  display: flex;
  flex-direction: column;
`;

const Canvas = styled.div`
  position: relative;
  flex: 1;
  min-height: 0;
  background: #000;
  overflow: hidden;
`;

const Sheet = styled.svg`
  display: block;
  width: 100%;
  height: 100%;
`;

const NoteLine = styled.text`
  font-family: Inter, "DejaVu Sans", sans-serif;
  font-size: 25px;
  font-weight: 300;
  fill: #fff;
  word-spacing: 7px;
  white-space: pre;
`;

const HandButton = styled.div`
  position: absolute;
  top: 20px;
  right: 20px;
  width: 80px;
  height: 80px;
  border-radius: 50%;
  background: #808080;
  display: flex;
  align-items: center;
  justify-content: center;
`;

const RecWidget = styled.div`
  position: absolute;
  left: 2015px;
  top: 375px;
  width: 38px;
  height: 180px;
  border-radius: 6px;
  background: #1f1f1f;
  display: flex;
  flex-direction: column;
  align-items: center;
  padding-top: 7px;
`;

const RecDot = styled.div`
  width: 22px;
  height: 22px;
  flex: none;
  border-radius: 50%;
  background: #ff0000;
  border: 2px solid #1f1f1f;
  outline: 2px solid #ff2020;
`;

const RecText = styled.div`
  margin-top: 5px;
  writing-mode: vertical-rl;
  font-family: Roboto, sans-serif;
  font-size: 32px;
  line-height: 38px;
  letter-spacing: -0.5px;
  color: #fff;
`;

const TabBar = styled.div`
  height: 41px;
  flex: none;
  display: flex;
  background: #f0f0f0;
  padding-left: 1px;
`;

const SheetTab = styled.div`
  position: relative;
  width: ${(p) => (p.$current ? 157 : 151)}px;
  height: 39px;
  margin-right: -1px;
  background: #000;
  clip-path: polygon(0 0, 100% 0, 93% 100%, 8% 100%);

  ${(p) =>
    !p.$current &&
    `
    &::before {
      content: "";
      position: absolute;
      inset: 0 1.5px 2px 1.5px;
      background: #fff;
      clip-path: polygon(0 0, 100% 0, 93% 100%, 8% 100%);
    }
  `}

  span {
    position: relative;
    display: block;
    font-size: 24px;
    line-height: 38px;
    text-align: center;
    color: ${(p) => (p.$current ? "#fff" : "#111")};
  }
`;

const StatusBar = styled.div`
  height: 36px;
  flex: none;
  display: flex;
  background: linear-gradient(#f1f0ec, #e9e5e0);
  border-top: 2px solid #000;
  font-size: 20px;
  letter-spacing: -0.2px;
`;

const StatusCell = styled.div`
  width: ${(p) => p.$w}px;
  padding-left: ${(p) => p.$pad}px;
  line-height: 34px;
  letter-spacing: ${(p) => p.$ls || -0.2}px;
  border-right: 1px solid #dcdad6;
  white-space: nowrap;
`;

const StatusGrip = styled.div`
  width: 38px;
  display: flex;
  flex-direction: column;
  justify-content: space-evenly;
  padding: 0 3px;
  border-right: 1px solid #dcdad6;

  i {
    display: block;
    height: 5px;
    background: #a2a2a2;
  }
`;

const Taskbar = styled.div`
  height: 96px;
  flex: none;
  display: flex;
  color: #fff;
  border-top: 3px solid #3b3f47;
  background: linear-gradient(90deg, #1c2029 0%, #1c2029 18%, #13235a 40%, #13235a 58%, #1c2029 76%, #1c2029 100%);
`;

const AppStrip = styled.div`
  display: flex;
  padding-left: 208px;
`;

const AppSlot = styled.div`
  position: relative;
  width: 88px;
  display: flex;
  flex-direction: column;
  align-items: center;
  padding-top: 24px;

  ${(p) =>
    p.$active &&
    `
    &::before {
      content: "";
      position: absolute;
      left: 7px;
      right: 12px;
      top: 6px;
      bottom: 4px;
      border-radius: 8px;
      background: rgba(255, 255, 255, 0.09);
      box-shadow: 6px 0 0 -1px rgba(255, 255, 255, 0.05);
    }
    & > svg { position: relative; }
  `}
`;

const Badge = styled.div`
  position: absolute;
  left: 24px;
  top: 12px;
  width: 56px;
  height: 32px;
  border-radius: 16px;
  background: #f0806a;
  color: #111;
  font-size: 21px;
  line-height: 32px;
  text-align: center;
`;

const AppDot = styled.div`
  position: relative;
  margin-top: 9px;
  width: ${(p) => (p.$active ? 30 : 11)}px;
  height: 6px;
  border-radius: 3px;
  background: ${(p) => (p.$active ? "#f5856c" : p.$show ? "#8a8e96" : "transparent")};
`;

const Tray = styled.div`
  display: flex;
  align-items: center;
  margin-left: 130px;
`;

const TrayItem = styled.div`
  width: ${(p) => p.$w}px;
  margin-left: ${(p) => p.$ml || 0}px;
  display: flex;
  align-items: center;
  justify-content: center;
  font-family: "Noto Sans CJK SC", sans-serif;
  font-size: 26px;
`;

const Clock = styled.div`
  width: 110px;
  margin-left: 29px;
  display: flex;
  flex-direction: column;
  align-items: center;
  font-size: 21px;
  line-height: 32px;
`;

const BigArrow = styled.svg`
  position: absolute;
  left: 0;
  top: 0;
  width: 2879px;
  height: 1799px;
  pointer-events: none;
`;
